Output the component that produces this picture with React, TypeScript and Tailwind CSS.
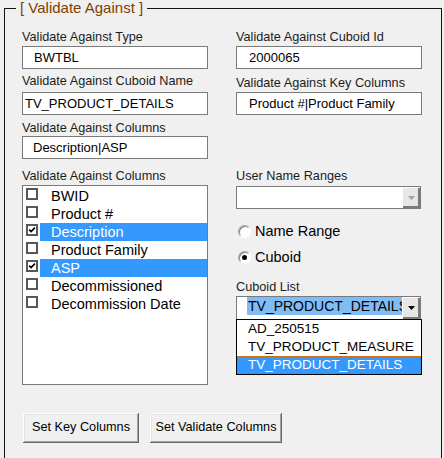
import React from "react";

function Label({ children, className = "" }: { children: React.ReactNode; className?: string }) {
  return (
    <div className={"h-[15px] whitespace-nowrap text-[12.7px] leading-[15px] text-[#1c1c1c] " + className}>
      {children}
    </div>
  );
}

function TextBox({ children, className = "", pad }: { children: React.ReactNode; className?: string; pad: string }) {
  return (
    <div
      className={
        "flex h-[23px] w-[186px] items-center whitespace-nowrap border border-[#7a7a7a] bg-white text-[13px] text-black " +
        pad +
        " " +
        className
      }
    >
      {children}
    </div>
  );
}

function Arrow({ color }: { color: string }) {
  return (
    <svg width="7" height="4" viewBox="0 0 7 4">
      <polygon points="0,0 7,0 3.5,4" fill={color} />
    </svg>
  );
}

function ComboButton({ color }: { color: string }) {
  return (
    <div className="flex h-full w-[18px] items-center justify-center bg-[#e6e6e6] shadow-[inset_1px_1px_#ffffff,inset_-2px_-2px_#7a7a7a]">
      <Arrow color={color} />
    </div>
  );
}

function Check() {
  return (
    <svg width="8" height="8" viewBox="0 0 8 8">
      <path d="M1.2 3.6 L3.1 5.6 L6.9 1.6" fill="none" stroke="#000" strokeWidth="1.6" />
    </svg>
  );
}

const items: { name: string; checked: boolean }[] = [
  { name: "BWID", checked: false },
  { name: "Product #", checked: false },
  { name: "Description", checked: true },
  { name: "Product Family", checked: false },
  { name: "ASP", checked: true },
  { name: "Decommissioned", checked: false },
  { name: "Decommission Date", checked: false },
];

function Radio({ checked, label, className = "" }: { checked: boolean; label: string; className?: string }) {
  return (
    <div className={"flex h-[18px] items-center " + className}>
      <div className="ml-[2px] flex h-[13px] w-[13px] items-center justify-center rounded-full border border-b-[#ffffff] border-l-[#a0a0a0] border-r-[#ffffff] border-t-[#a0a0a0] bg-white shadow-[inset_1px_1px_#8a8a8a]">
        {checked && <div className="h-[5px] w-[5px] rounded-full bg-black" />}
      </div>
      <span className="ml-[4px] text-[14.5px] leading-[18px] text-black">{label}</span>
    </div>
  );
}

function Button({ children, w, className = "" }: { children: React.ReactNode; w: string; className?: string }) {
  return (
    <div
      className={
        "flex h-[30px] items-center justify-center overflow-hidden whitespace-nowrap bg-[#f0f0f0] text-[12.7px] text-black shadow-[inset_-1px_-1px_#696969,inset_1px_1px_#ffffff,inset_-2px_-2px_#a0a0a0,inset_2px_2px_#e3e3e3] " +
        w +
        " " +
        className
      }
    >
      {children}
    </div>
  );
}

export default function App() {
  return (
    <div className="h-[458px] w-[444px] overflow-hidden bg-[#f0f0f0] pt-[8px] font-['Liberation_Sans',Arial,sans-serif] text-black">
      <div className="relative ml-[4px] h-[470px] w-[438px] bg-[#141414] p-[1px]">
        <div className="h-full w-full bg-[#f0f0f0] pl-[17px] pt-[21px]">
          <div className="flex gap-[28px]">
            {/* Left column */}
            <div className="flex w-[186px] flex-col">
              <Label>Validate Against Type</Label>
              <TextBox className="mt-[1px]" pad="pl-[11px]">BWTBL</TextBox>
              <Label className="mt-[5px]">Validate Against Cuboid Name</Label>
              <TextBox className="mt-[3px]" pad="pl-[2px]">TV_PRODUCT_DETAILS</TextBox>
              <Label className="mt-[6px]">Validate Against Columns</Label>
              <TextBox pad="pl-[10px]">Description|ASP</TextBox>
              <Label className="mt-[10px]">Validate Against Columns</Label>
              <div className="mt-[1px] h-[200px] w-[186px] border border-[#7a7a7a] bg-white pt-[1px]">
                {items.map((it) => (
                  <div key={it.name} className="flex h-[18px] items-start">
                    <div className="ml-[3px] mt-[1px] flex h-[12px] w-[12px] shrink-0 items-center justify-center border-2 border-[#585858] bg-white">
                      {it.checked && <Check />}
                    </div>
                    <div
                      className={
                        "ml-[2px] flex h-[18px] flex-1 items-center whitespace-nowrap pl-[11px] text-[14.5px] leading-[18px] " +
                        (it.checked ? "bg-[#3399ff] text-white" : "text-black")
                      }
                    >
                      {it.name}
                    </div>
                  </div>
                ))}
              </div>
            </div>
            {/* Right column */}
            <div className="flex w-[186px] flex-col">
              <Label>Validate Against Cuboid Id</Label>
              <TextBox className="mt-[1px]" pad="pl-[12px]">2000065</TextBox>
              <Label className="mt-[7px]">Validate Against Key Columns</Label>
              <TextBox className="mt-[1px]" pad="pl-[12px]">Product #|Product Family</TextBox>
              <Label className="mt-[54px]">User Name Ranges</Label>
              <div className="mt-[2px] flex h-[23px] w-[185px] border border-[#7a7a7a] bg-white">
                <div className="flex-1" />
                <ComboButton color="#a0a0a0" />
              </div>
              <Radio className="mt-[13px]" checked={false} label="Name Range" />
              <Radio className="mt-[8px]" checked={true} label="Cuboid" />
              <Label className="mt-[14px]">Cuboid List</Label>
              <div className="relative mt-[1px] flex h-[24px] w-[185px] border border-[#7a7a7a] bg-white">
                <div className="flex flex-1 items-start overflow-hidden pl-[10px]">
                  <span className="h-[18px] whitespace-nowrap bg-[#80bdf5] px-[1px] text-[14px] leading-[18px] text-black">
                    TV_PRODUCT_DETAILS
                  </span>
                </div>
                <ComboButton color="#000000" />
                <div className="absolute left-[-1px] top-full z-10 w-[186px] border border-black bg-white text-[13.5px] leading-[18px] text-black">
                  <div className="h-[18px] pl-[11px]">AD_250515</div>
                  <div className="h-[18px] pl-[11px]">TV_PRODUCT_MEASURE</div>
                  <div className="h-[18px] bg-[#3399ff] pl-[11px] text-white outline-1 -outline-offset-1 outline-dotted outline-[#cc6600]">
                    TV_PRODUCT_DETAILS
                  </div>
                </div>
              </div>
            </div>
          </div>
          <div className="mt-[28px] flex">
            <Button w="w-[116px]" className="ml-[1px]">
              Set Key Columns
            </Button>
            <Button w="w-[132px]" className="ml-[11px]">
              Set Validate Columns
            </Button>
          </div>
        </div>
        <span className="absolute left-[12px] top-[-9px] bg-[#f0f0f0] px-[4px] text-[15px] leading-[17px] text-[#804000]">
          [ Validate Against ]
        </span>
      </div>
    </div>
  );
}
